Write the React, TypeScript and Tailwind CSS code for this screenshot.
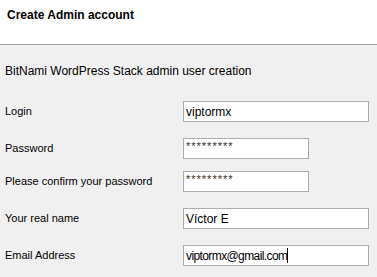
const font = { fontFamily: '"Liberation Sans", Arial, sans-serif' };

function Field({ label, value, short, caret, secret, tight }: { label: string; value: string; short?: boolean; caret?: boolean; secret?: boolean; tight?: boolean }) {
  return (
    <div className="flex items-center h-[21px]">
      <div className="w-[178px] text-[11px] text-black">{label}</div>
      <div
        className={`h-[21px] border border-[#acacac] bg-white flex px-[2px] ${short ? "w-[126px]" : "w-[186px]"} ${secret ? "items-start pt-[2px]" : "items-center"}`}
      >
        <span
          className={
            secret
              ? "text-[11px] leading-[11px] text-[#3a2a1a] tracking-[1px]"
              : `text-[12px] text-black ${tight ? "tracking-[-0.6px]" : ""}`
          }
        >
          {value}
        </span>
        {caret && <span className="w-px h-[15px] bg-black" />}
      </div>
    </div>
  );
}

export default function App() {
  return (
    <div className="w-[377px] h-[277px] bg-[#f0f0f0] overflow-hidden" style={font}>
      <div className="h-[45px] bg-white border-b border-[#a0a0a0] pl-[7px] pt-[7px]">
        <h1 className="text-[12px] font-bold text-black leading-[16px]">Create Admin account</h1>
      </div>
      <div className="pl-[5px]">
        <p className="text-[12px] text-black mt-[19px] leading-[14px]">BitNami WordPress Stack admin user creation</p>
        <div className="mt-[23px] flex flex-col">
          <Field label="Login" value="viptormx" />
          <div className="mt-[16px]" />
          <Field label="Password" value="*********" short secret />
          <div className="mt-[12px]" />
          <Field label="Please confirm your password" value="*********" short secret />
          <div className="mt-[16px]" />
          <Field label="Your real name" value="Víctor E" />
          <div className="mt-[16px]" />
          <Field label="Email Address" value="viptormx@gmail.com" caret tight />
        </div>
      </div>
    </div>
  );
}
